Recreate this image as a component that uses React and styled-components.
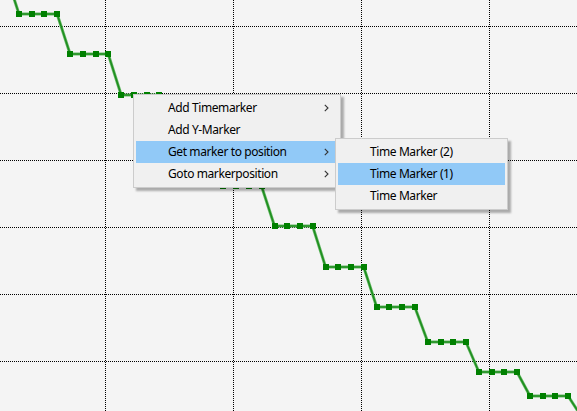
import React from "react";
import styled, { createGlobalStyle } from "styled-components";

const GlobalStyle = createGlobalStyle`
  html, body {
    margin: 0;
    padding: 0;
    background: #f4f4f4;
  }
  body {
    font-family: "Noto Sans", "Open Sans", sans-serif;
  }
`;

const W = 577;
const H = 411;
const H_LINES = [26, 93, 160, 227, 294, 361];
const V_LINES = [105, 233, 361, 489];
const LEVELS = [14, 54, 95, 140, 186, 226, 267, 307, 342, 372, 396, 416];

function buildSeries() {
  const pts = [[6, -26]];
  const markers = [];
  LEVELS.forEach((y, i) => {
    const x0 = 19 + i * 51.1;
    for (let k = 0; k < 4; k++) {
      const x = x0 + k * 12.7;
      if (k === 0 || k === 3) pts.push([x, y]);
      markers.push([x, y]);
    }
  });
  return { pts, markers };
}

const Screen = styled.div`
  position: relative;
  width: ${W}px;
  height: ${H}px;
  overflow: hidden;
  background: #f4f4f4;
`;

const Plot = styled.svg`
  display: block;
`;

const Menu = styled.ul`
  position: absolute;
  left: ${(p) => p.$x}px;
  top: ${(p) => p.$y}px;
  width: ${(p) => p.$w}px;
  margin: 0;
  padding: 2px;
  list-style: none;
  box-sizing: border-box;
  background: #f0f0f0;
  border: 1px solid #cccccc;
  box-shadow: 3px 3px 2px rgba(0, 0, 0, 0.3);
`;

const Item = styled.li`
  position: relative;
  display: flex;
  align-items: center;
  box-sizing: border-box;
  height: 22px;
  padding: 0 0 2px 32px;
  font-size: 12px;
  letter-spacing: -0.4px;
  color: #000;
  white-space: nowrap;
  background: ${(p) => (p.$active ? "#91c9f7" : "transparent")};
`;

const Chevron = styled.svg`
  position: absolute;
  right: 9px;
  top: 7px;
`;

function Arrow() {
  return (
    <Chevron width="5" height="8" viewBox="0 0 5 8">
      <path d="M0.8 0.8 L4 4 L0.8 7.2" fill="none" stroke="#333" strokeWidth="1.1" />
    </Chevron>
  );
}

export default function App() {
  const { pts, markers } = buildSeries();
  const line = pts.map((p) => p.join(",")).join(" ");
  return (
    <Screen>
      <GlobalStyle />
      <Plot width={W} height={H} viewBox={`0 0 ${W} ${H}`}>
        {H_LINES.map((y) => (
          <line key={"h" + y} x1="0" x2={W} y1={y + 0.5} y2={y + 0.5} stroke="#000" strokeDasharray="1 1" shapeRendering="crispEdges" />
        ))}
        {V_LINES.map((x) => (
          <line key={"v" + x} x1={x + 0.5} x2={x + 0.5} y1="0" y2={H} stroke="#000" strokeDasharray="1 1" shapeRendering="crispEdges" />
        ))}
        <polyline points={line} fill="none" stroke="#66b866" strokeWidth="3" strokeLinejoin="round" />
        <polyline points={line} fill="none" stroke="#1f8f1f" strokeWidth="1.6" strokeLinejoin="round" />
        {markers.map(([x, y], i) => (
          <rect key={i} x={Math.round(x) - 3} y={Math.round(y) - 3} width="6" height="6" fill="#008000" />
        ))}
      </Plot>

      <Menu $x={133} $y={94} $w={208}>
        <Item>Add Timemarker<Arrow /></Item>
        <Item>Add Y-Marker</Item>
        <Item $active>Get marker to position<Arrow /></Item>
        <Item>Goto markerposition<Arrow /></Item>
      </Menu>

      <Menu $x={335} $y={138} $w={173}>
        <Item>Time Marker (2)</Item>
        <Item $active>Time Marker (1)</Item>
        <Item>Time Marker</Item>
      </Menu>
    </Screen>
  );
}
